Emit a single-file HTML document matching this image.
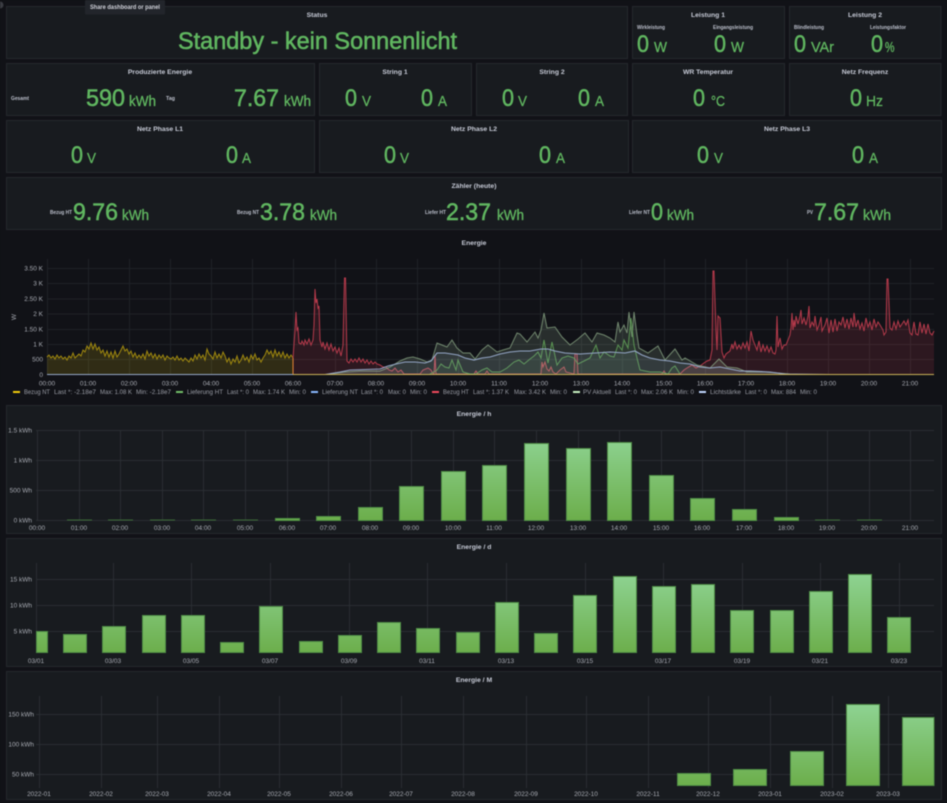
<!DOCTYPE html>
<html><head><meta charset="utf-8"><title>Grafana</title>
<style>
html,body{margin:0;padding:0;background:#111217;width:947px;height:803px;overflow:hidden}
svg{display:block;filter:blur(.4px)}
text{font-family:"Liberation Sans",sans-serif}
.p{fill:#181b1f;stroke:#25282d;stroke-width:1}
.t{font-size:6.8px;font-weight:bold;fill:#c6cad6;text-anchor:middle}
.b{font-size:24.5px;fill:#60b660;stroke:#60b660;stroke-width:.55px}
.u{font-size:15px;fill:#60b660;stroke:#60b660;stroke-width:.3px}
.l{font-size:5.5px;fill:#bcc0cc;font-weight:bold}
.a{font-size:6.5px;fill:#a8abb3}
.e{text-anchor:end}.m{text-anchor:middle}
.k{font-size:6px;fill:#9a9da6}
.g line{stroke:#2a2d32;stroke-width:1}
.gd line{stroke:#1f2227;stroke-width:1}
</style></head><body>
<svg width="947" height="803" viewBox="0 0 947 803" xmlns="http://www.w3.org/2000/svg">
<defs>
<linearGradient id="gh" gradientUnits="userSpaceOnUse" x1="0" y1="432" x2="0" y2="520"><stop offset="0" stop-color="#90d596"/><stop offset="1" stop-color="#6cae4b"/></linearGradient>
<linearGradient id="gd" gradientUnits="userSpaceOnUse" x1="0" y1="570" x2="0" y2="653"><stop offset="0" stop-color="#90d596"/><stop offset="1" stop-color="#6cae4b"/></linearGradient>
<linearGradient id="gm" gradientUnits="userSpaceOnUse" x1="0" y1="700" x2="0" y2="786"><stop offset="0" stop-color="#90d596"/><stop offset="1" stop-color="#6cae4b"/></linearGradient>
</defs>
<rect width="947" height="803" fill="#111217"/>
<circle cx="0" cy="5" r="3.5" fill="#3a3c42"/>

<!-- panels -->
<rect class="p" x="6.5" y="6.5" width="621" height="52"/>
<rect class="p" x="632.5" y="6.5" width="152" height="52"/>
<rect class="p" x="789.5" y="6.5" width="151.5" height="52"/>
<rect class="p" x="6.5" y="63.5" width="308" height="52"/>
<rect class="p" x="319.5" y="63.5" width="152" height="52"/>
<rect class="p" x="476.5" y="63.5" width="151" height="52"/>
<rect class="p" x="632.5" y="63.5" width="152" height="52"/>
<rect class="p" x="789.5" y="63.5" width="151.5" height="52"/>
<rect class="p" x="6.5" y="120.5" width="308" height="52"/>
<rect class="p" x="319.5" y="120.5" width="309" height="52"/>
<rect class="p" x="632.5" y="120.5" width="309" height="52"/>
<rect class="p" x="6.5" y="177.5" width="935" height="52"/>
<rect class="p" x="6.5" y="405.5" width="935" height="128"/>
<rect class="p" x="6.5" y="538.5" width="935" height="128"/>
<rect class="p" x="6.5" y="671.5" width="935" height="128"/>

<!-- tooltip -->
<rect x="85" y="0" width="80" height="14.5" rx="1" fill="#22252b"/>
<text x="90" y="9" font-size="6.2" font-weight="bold" fill="#d0d2da" textLength="70" lengthAdjust="spacingAndGlyphs">Share dashboard or panel</text>

<!-- titles -->
<text class="t" x="317" y="17">Status</text>
<text class="t" x="708" y="17">Leistung 1</text>
<text class="t" x="865" y="17">Leistung 2</text>
<text class="t" x="160" y="74">Produzierte Energie</text>
<text class="t" x="395" y="74">String 1</text>
<text class="t" x="552" y="74">String 2</text>
<text class="t" x="708" y="74">WR Temperatur</text>
<text class="t" x="865" y="74">Netz Frequenz</text>
<text class="t" x="160" y="131">Netz Phase L1</text>
<text class="t" x="474" y="131">Netz Phase L2</text>
<text class="t" x="787" y="131">Netz Phase L3</text>
<text class="t" x="474" y="188">Zähler (heute)</text>
<text class="t" x="474" y="245">Energie</text>
<text class="t" x="474" y="416">Energie / h</text>
<text class="t" x="474" y="549">Energie / d</text>
<text class="t" x="474" y="682">Energie / M</text>

<!-- status -->
<text x="178" y="49" font-size="24" fill="#60b660" stroke="#60b660" stroke-width=".55" textLength="279" lengthAdjust="spacingAndGlyphs">Standby - kein Sonnenlicht</text>

<!-- small labels -->
<text class="l" x="637" y="29" textLength="28" lengthAdjust="spacingAndGlyphs">Wirkleistung</text>
<text class="l" x="713" y="29" textLength="40" lengthAdjust="spacingAndGlyphs">Eingangsleistung</text>
<text class="l" x="794" y="29" textLength="30" lengthAdjust="spacingAndGlyphs">Blindleistung</text>
<text class="l" x="870" y="29" textLength="36" lengthAdjust="spacingAndGlyphs">Leistungsfaktor</text>
<text class="l" x="11" y="100" textLength="18" lengthAdjust="spacingAndGlyphs">Gesamt</text>
<text class="l" x="166" y="100" textLength="9" lengthAdjust="spacingAndGlyphs">Tag</text>
<text class="l" x="50" y="214" textLength="22" lengthAdjust="spacingAndGlyphs">Bezug HT</text>
<text class="l" x="237" y="214" textLength="22" lengthAdjust="spacingAndGlyphs">Bezug NT</text>
<text class="l" x="425" y="214" textLength="21" lengthAdjust="spacingAndGlyphs">Liefer HT</text>
<text class="l" x="629" y="214" textLength="21" lengthAdjust="spacingAndGlyphs">Liefer NT</text>
<text class="l" x="807" y="214" textLength="6" lengthAdjust="spacingAndGlyphs">PV</text>

<!-- values row 1 -->
<text class="b" x="637" y="52" textLength="12" lengthAdjust="spacingAndGlyphs">0</text><text class="u" x="654" y="52" textLength="13" lengthAdjust="spacingAndGlyphs">W</text>
<text class="b" x="714" y="52" textLength="12" lengthAdjust="spacingAndGlyphs">0</text><text class="u" x="731" y="52" textLength="13" lengthAdjust="spacingAndGlyphs">W</text>
<text class="b" x="794" y="52" textLength="12" lengthAdjust="spacingAndGlyphs">0</text><text class="u" x="811" y="52" textLength="23" lengthAdjust="spacingAndGlyphs">VAr</text>
<text class="b" x="871" y="52" textLength="12" lengthAdjust="spacingAndGlyphs">0</text><text class="u" x="885" y="52" textLength="9.500" lengthAdjust="spacingAndGlyphs">%</text>
<!-- row 2 -->
<text class="b" x="86" y="106" textLength="39" lengthAdjust="spacingAndGlyphs">590</text><text class="u" x="129" y="106" textLength="27" lengthAdjust="spacingAndGlyphs">kWh</text>
<text class="b" x="234" y="106" textLength="45" lengthAdjust="spacingAndGlyphs">7.67</text><text class="u" x="284" y="106" textLength="27" lengthAdjust="spacingAndGlyphs">kWh</text>
<text class="b" x="345" y="106" textLength="12" lengthAdjust="spacingAndGlyphs">0</text><text class="u" x="362" y="106" textLength="9" lengthAdjust="spacingAndGlyphs">V</text>
<text class="b" x="421" y="106" textLength="12" lengthAdjust="spacingAndGlyphs">0</text><text class="u" x="438" y="106" textLength="9" lengthAdjust="spacingAndGlyphs">A</text>
<text class="b" x="502" y="106" textLength="12" lengthAdjust="spacingAndGlyphs">0</text><text class="u" x="518" y="106" textLength="9" lengthAdjust="spacingAndGlyphs">V</text>
<text class="b" x="578" y="106" textLength="12" lengthAdjust="spacingAndGlyphs">0</text><text class="u" x="595" y="106" textLength="9" lengthAdjust="spacingAndGlyphs">A</text>
<text class="b" x="693" y="106" textLength="12" lengthAdjust="spacingAndGlyphs">0</text><text class="u" x="711" y="106" textLength="14" lengthAdjust="spacingAndGlyphs">°C</text>
<text class="b" x="850" y="106" textLength="12" lengthAdjust="spacingAndGlyphs">0</text><text class="u" x="866" y="106" textLength="17" lengthAdjust="spacingAndGlyphs">Hz</text>
<!-- row 3 -->
<text class="b" x="71" y="163" textLength="12" lengthAdjust="spacingAndGlyphs">0</text><text class="u" x="87" y="163" textLength="9" lengthAdjust="spacingAndGlyphs">V</text>
<text class="b" x="226" y="163" textLength="12" lengthAdjust="spacingAndGlyphs">0</text><text class="u" x="242" y="163" textLength="9" lengthAdjust="spacingAndGlyphs">A</text>
<text class="b" x="384" y="163" textLength="12" lengthAdjust="spacingAndGlyphs">0</text><text class="u" x="400" y="163" textLength="9" lengthAdjust="spacingAndGlyphs">V</text>
<text class="b" x="539" y="163" textLength="12" lengthAdjust="spacingAndGlyphs">0</text><text class="u" x="556" y="163" textLength="9" lengthAdjust="spacingAndGlyphs">A</text>
<text class="b" x="697" y="163" textLength="12" lengthAdjust="spacingAndGlyphs">0</text><text class="u" x="714" y="163" textLength="9" lengthAdjust="spacingAndGlyphs">V</text>
<text class="b" x="852" y="163" textLength="12" lengthAdjust="spacingAndGlyphs">0</text><text class="u" x="869" y="163" textLength="9" lengthAdjust="spacingAndGlyphs">A</text>
<!-- row 4 -->
<text class="b" x="73" y="220" textLength="45" lengthAdjust="spacingAndGlyphs">9.76</text><text class="u" x="122" y="220" textLength="27" lengthAdjust="spacingAndGlyphs">kWh</text>
<text class="b" x="260" y="220" textLength="45" lengthAdjust="spacingAndGlyphs">3.78</text><text class="u" x="310" y="220" textLength="27" lengthAdjust="spacingAndGlyphs">kWh</text>
<text class="b" x="446" y="220" textLength="45" lengthAdjust="spacingAndGlyphs">2.37</text><text class="u" x="497" y="220" textLength="27" lengthAdjust="spacingAndGlyphs">kWh</text>
<text class="b" x="651" y="220" textLength="12" lengthAdjust="spacingAndGlyphs">0</text><text class="u" x="667" y="220" textLength="27" lengthAdjust="spacingAndGlyphs">kWh</text>
<text class="b" x="814" y="220" textLength="45" lengthAdjust="spacingAndGlyphs">7.67</text><text class="u" x="863" y="220" textLength="28" lengthAdjust="spacingAndGlyphs">kWh</text>

<!-- ENERGIE chart grid -->
<g class="gd">
<line x1="47" y1="268.500" x2="934" y2="268.500"/><line x1="47" y1="283.500" x2="934" y2="283.500"/><line x1="47" y1="299" x2="934" y2="299"/><line x1="47" y1="314" x2="934" y2="314"/><line x1="47" y1="329.500" x2="934" y2="329.500"/><line x1="47" y1="344.500" x2="934" y2="344.500"/><line x1="47" y1="359.500" x2="934" y2="359.500"/>
<line x1="47.500" y1="259" x2="47.500" y2="375"/><line x1="88.500" y1="259" x2="88.500" y2="375"/><line x1="129.500" y1="259" x2="129.500" y2="375"/><line x1="170.500" y1="259" x2="170.500" y2="375"/><line x1="211.500" y1="259" x2="211.500" y2="375"/><line x1="252.500" y1="259" x2="252.500" y2="375"/><line x1="293.500" y1="259" x2="293.500" y2="375"/><line x1="335.500" y1="259" x2="335.500" y2="375"/><line x1="376.500" y1="259" x2="376.500" y2="375"/><line x1="417.500" y1="259" x2="417.500" y2="375"/><line x1="458.500" y1="259" x2="458.500" y2="375"/><line x1="499.500" y1="259" x2="499.500" y2="375"/><line x1="540.500" y1="259" x2="540.500" y2="375"/><line x1="581.500" y1="259" x2="581.500" y2="375"/><line x1="622.500" y1="259" x2="622.500" y2="375"/><line x1="664.500" y1="259" x2="664.500" y2="375"/><line x1="705.500" y1="259" x2="705.500" y2="375"/><line x1="746.500" y1="259" x2="746.500" y2="375"/><line x1="787.500" y1="259" x2="787.500" y2="375"/><line x1="828.500" y1="259" x2="828.500" y2="375"/><line x1="869.500" y1="259" x2="869.500" y2="375"/><line x1="910.500" y1="259" x2="910.500" y2="375"/>
</g>

<!-- yellow -->
<path fill="#f2cc0c" fill-opacity=".14" stroke="none" d="M47 374.500V357L49 355 51 358 53 356 55 359 57 355 59 358 61 356 63 359 65 357 67 360 69 356 71 358 73 353 75 358 77 356 79 354 81 356 83 350 85 352 87 346 89 349 91 343 93 349 95 344 97 350 99 347 101 353 103 350 105 356 107 351 109 357 111 352 113 358 115 351 117 357 119 354 121 350 123 346 125 351 127 349 129 354 131 351 133 357 135 353 137 358 139 355 141 358 143 354 145 359 147 351 149 356 151 353 153 358 155 354 157 359 159 355 161 358 163 355 165 360 167 356 169 358 171 359 173 357 175 360 177 356 179 360 181 358 183 361 185 358 187 360 189 362 191 358 193 361 195 355 197 359 199 354 201 358 203 355 205 360 207 349 209 354 211 356 213 359 215 352 217 358 219 354 221 358 223 352 225 356 227 362 229 358 231 364 233 359 235 362 237 356 239 363 241 360 243 355 245 360 247 357 249 362 251 355 253 359 255 354 257 360 259 358 261 362 263 358 265 355 267 350 269 354 271 351 273 357 275 350 277 356 279 352 281 357 283 352 285 358 287 354 289 358 291 355 293 358V374.500Z"/>
<polyline fill="none" stroke="#d9b80c" stroke-opacity=".7" stroke-width="1" points="47,357 49,355 51,358 53,356 55,359 57,355 59,358 61,356 63,359 65,357 67,360 69,356 71,358 73,353 75,358 77,356 79,354 81,356 83,350 85,352 87,346 89,349 91,343 93,349 95,344 97,350 99,347 101,353 103,350 105,356 107,351 109,357 111,352 113,358 115,351 117,357 119,354 121,350 123,346 125,351 127,349 129,354 131,351 133,357 135,353 137,358 139,355 141,358 143,354 145,359 147,351 149,356 151,353 153,358 155,354 157,359 159,355 161,358 163,355 165,360 167,356 169,358 171,359 173,357 175,360 177,356 179,360 181,358 183,361 185,358 187,360 189,362 191,358 193,361 195,355 197,359 199,354 201,358 203,355 205,360 207,349 209,354 211,356 213,359 215,352 217,358 219,354 221,358 223,352 225,356 227,362 229,358 231,364 233,359 235,362 237,356 239,363 241,360 243,355 245,360 247,357 249,362 251,355 253,359 255,354 257,360 259,358 261,362 263,358 265,355 267,350 269,354 271,351 273,357 275,350 277,356 279,352 281,357 283,352 285,358 287,354 289,358 291,355 293,358"/>

<!-- red -->
<path fill="#f2495c" fill-opacity=".13" stroke="none" d="M293 374.500V358L295 330 296 312 297 330 298 328 299 343 301 344 302 341 304 345 305 340 307 344 309 339 311 345 313 340 314 325 315 289 316 303 317 299 318 308 319 306 320 340 322 347 323 342 325 349 327 343 329 350 331 344 333 351 335 347 337 353 339 348 341 356 343 345 344.500 278 345.500 278 347 361 349 363 351 359 353 362 355 359 357 362 359 358 361 362 363 359 365 363 367 360 369 364 371 361 373 364 375 362 377 364 380 365 383 367 386 367 389 370 392 371 395 368 398 372 401 370 404 374 420 374 423 370 428 368 431 370 433 374 434 374 435 355 436 374 440 374 474 374 476 371 478 374 485 374 487 371 489 374 541 374 542 362 543 367 545 362 547 369 549 371 551 367 553 372 556 374 560 370 564 367 566 372 574 374 575 354 577 354 578 374 662 374 664 371 666 374 680 374 684 370 687 368 692 365 696 368 700 366 704 363 707 361 710 360 712 350 713 271 714 271 716 330 717 350 718 316 720 318 722 352 724 358 726 354 730 351 732 344 733 349 735 342 737 349 739 345 741 349 743 343 745 348 747 342 749 351 751 331 753 340 755 345 757 350 759 341 761 352 763 345 765 351 767 346 769 352 771 347 773 353 775 354 776 350 777 316 778 347 780 338 782 349 784 345 786 345 788 340 790 335 791 328 792 313 793 330 794 320 795 327 796 316 798 324 800 316 801 310 802 324 804 318 806 325 808 316 809 306 810 328 812 322 814 326 815 316 817 330 819 325 821 317 822 331 825 325 827 318 829 333 831 320 833 332 835 319 837 331 839 322 841 325 843 317 845 328 847 319 849 329 851 318 853 327 854 313 856 327 858 320 860 329 862 323 864 331 866 318 868 327 870 322 872 330 874 319 876 327 878 322 880 325 883 330 884 335 886 332 887 279 888 279 890 328 892 330 894 322 896 329 898 321 900 327 902 324 904 321 906 325 908 320 910 333 912 335 914 322 916 334 918 335 920 322 922 333 924 324 926 334 928 324 930 333 932 335 934 331V374.500Z"/>
<polyline fill="none" stroke="#b63a4b" stroke-width="1" points="293,358 295,330 296,312 297,330 298,328 299,343 301,344 302,341 304,345 305,340 307,344 309,339 311,345 313,340 314,325 315,289 316,303 317,299 318,308 319,306 320,340 322,347 323,342 325,349 327,343 329,350 331,344 333,351 335,347 337,353 339,348 341,356 343,345 344.500,278 345.500,278 347,361 349,363 351,359 353,362 355,359 357,362 359,358 361,362 363,359 365,363 367,360 369,364 371,361 373,364 375,362 377,364 380,365 383,367 386,367 389,370 392,371 395,368 398,372 401,370 404,374 420,374 423,370 428,368 431,370 433,374 434,374 435,355 436,374 440,374 474,374 476,371 478,374 485,374 487,371 489,374 541,374 542,362 543,367 545,362 547,369 549,371 551,367 553,372 556,374 560,370 564,367 566,372 574,374 575,354 577,354 578,374 662,374 664,371 666,374 680,374 684,370 687,368 692,365 696,368 700,366 704,363 707,361 710,360 712,350 713,271 714,271 716,330 717,350 718,316 720,318 722,352 724,358 726,354 730,351 732,344 733,349 735,342 737,349 739,345 741,349 743,343 745,348 747,342 749,351 751,331 753,340 755,345 757,350 759,341 761,352 763,345 765,351 767,346 769,352 771,347 773,353 775,354 776,350 777,316 778,347 780,338 782,349 784,345 786,345 788,340 790,335 791,328 792,313 793,330 794,320 795,327 796,316 798,324 800,316 801,310 802,324 804,318 806,325 808,316 809,306 810,328 812,322 814,326 815,316 817,330 819,325 821,317 822,331 825,325 827,318 829,333 831,320 833,332 835,319 837,331 839,322 841,325 843,317 845,328 847,319 849,329 851,318 853,327 854,313 856,327 858,320 860,329 862,323 864,331 866,318 868,327 870,322 872,330 874,319 876,327 878,322 880,325 883,330 884,335 886,332 887,279 888,279 890,328 892,330 894,322 896,329 898,321 900,327 902,324 904,321 906,325 908,320 910,333 912,335 914,322 916,334 918,335 920,322 922,333 924,324 926,334 928,324 930,333 932,335 934,331"/>
<line x1="293" y1="358" x2="293" y2="374" stroke="#e08030" stroke-width="1"/>

<!-- PV fill + line -->
<path fill="#c8f2c2" fill-opacity=".13" stroke="none" d="M330 374.500 L345 372 360 371 380 371 390 367 400 361 407 358 413 357 420 359 427 362 432 360 437 343 442 345 447 347 452 340 457 348 463 353 470 353 475 359 482 350 488 345 497 352 503 350 510 348 517 333 520 334 527 342 535 332 538 338 541 330 544 313 547 328 555 327 562 337 570 345 578 339 585 333 592 342 597 333 604 335 610 338 615 342 618 322 620 332 624 325 627 333 629 312 632 337 634 312 637 335 639 348 648 353 658 346 665 360 675 349 682 360 685 358 697 365 710 368 719 359 727 367 737 368 747 372 765 372 790 374 790 374.500Z"/>
<polyline fill="none" stroke="#8fac89" stroke-opacity=".75" stroke-width="1" points="330,374 345,372 360,371 380,371 390,367 400,361 407,358 413,357 420,359 427,362 432,360 437,343 442,345 447,347 452,340 457,348 463,353 470,353 475,359 482,350 488,345 497,352 503,350 510,348 517,333 520,334 527,342 535,332 538,338 541,330 544,313 547,328 555,327 562,337 570,345 578,339 585,333 592,342 597,333 604,335 610,338 615,342 618,322 620,332 624,325 627,333 629,312 632,337 634,312 637,335 639,348 648,353 658,346 665,360 675,349 682,360 685,358 697,365 710,368 719,359 727,367 737,368 747,372 765,372 790,374"/>

<!-- Lieferung HT green -->
<path fill="#73bf69" fill-opacity=".08" stroke="none" d="M430 374.500 L437 370 441 364 445 367 449 368 452 360 456 370 458 360 463 372 470 374 476 374 482 370 487 368 492 372 500 372 507 368 514 362 519 360 524 364 530 359 534 356 538 352 541 358 544 340 548 363 552 342 557 365 562 358 568 356 574 358 578 364 584 361 590 358 596 345 600 358 604 352 610 356 614 357 618 345 622 350 624 340 628 348 631 318 634 345 637 358 640 370 650 372 660 372 668 374 672 368 675 366 680 374V374.500Z"/>
<polyline fill="none" stroke="#5f9e57" stroke-opacity=".9" stroke-width="1" points="430,374 437,370 441,364 445,367 449,368 452,360 456,370 458,360 463,372 470,374 476,374 482,370 487,368 492,372 500,372 507,368 514,362 519,360 524,364 530,359 534,356 538,352 541,358 544,340 548,363 552,342 557,365 562,358 568,356 574,358 578,364 584,361 590,358 596,345 600,358 604,352 610,356 614,357 618,345 622,350 624,340 628,348 631,318 634,345 637,358 640,370 650,372 660,372 668,374 672,368 675,366 680,374"/>

<!-- Lichtstaerke -->
<path fill="#c0d8ff" fill-opacity=".08" stroke="none" d="M325 374.500 L340 372 350 370 365 369.500 380 369 388 366 396 364 405 362 415 362 425 363 431 361 437 353 445 353 458 355 465 358 474 360 482 358 490 357 500 354 510 352 520 351 530 351 541 349 548 349 555 351 565 353 580 354 595 353 610 352 625 353 635 351 642 355 650 358 660 360 670 361 680 363 690 364 700 367 710 368 720 367 730 369 740 371 750 371 770 372 785 374 800 374.500Z"/>
<polyline fill="none" stroke="#94a6c6" stroke-width="1.100" points="47,374.500 325,374.500 340,372 350,370 365,369.500 380,369 388,366 396,364 405,362 415,362 425,363 431,361 437,353 445,353 458,355 465,358 474,360 482,358 490,357 500,354 510,352 520,351 530,351 541,349 548,349 555,351 565,353 580,354 595,353 610,352 625,353 635,351 642,355 650,358 660,360 670,361 680,363 690,364 700,367 710,368 720,367 730,369 740,371 750,371 770,372 785,374 830,374.500"/>
<line x1="293" y1="374.500" x2="934" y2="374.500" stroke="#c9b257" stroke-width="1"/>

<!-- Energie axes -->
<g class="a e">
<text x="43" y="270.500">3.50 K</text><text x="43" y="285.500">3 K</text><text x="43" y="301">2.50 K</text><text x="43" y="316">2 K</text><text x="43" y="331.500">1.50 K</text><text x="43" y="346.500">1 K</text><text x="43" y="361.500">500</text><text x="43" y="377">0</text>
</g>
<text class="a m" transform="translate(16,317) rotate(-90)">W</text>
<g class="a m">
<text x="47" y="385.500">00:00</text><text x="88" y="385.500">01:00</text><text x="129" y="385.500">02:00</text><text x="170" y="385.500">03:00</text><text x="211" y="385.500">04:00</text><text x="252" y="385.500">05:00</text><text x="293" y="385.500">06:00</text><text x="335" y="385.500">07:00</text><text x="376" y="385.500">08:00</text><text x="417" y="385.500">09:00</text><text x="458" y="385.500">10:00</text><text x="499" y="385.500">11:00</text><text x="540" y="385.500">12:00</text><text x="581" y="385.500">13:00</text><text x="622" y="385.500">14:00</text><text x="664" y="385.500">15:00</text><text x="705" y="385.500">16:00</text><text x="746" y="385.500">17:00</text><text x="787" y="385.500">18:00</text><text x="828" y="385.500">19:00</text><text x="869" y="385.500">20:00</text><text x="910" y="385.500">21:00</text>
</g>

<!-- legend -->
<rect x="13" y="391" width="7" height="2" fill="#f2cc0c"/><rect x="176" y="391" width="7" height="2" fill="#73bf69"/><rect x="311" y="391" width="7" height="2" fill="#8ab8ff"/><rect x="432" y="391" width="7" height="2" fill="#f2495c"/><rect x="573" y="391" width="7" height="2" fill="#c8f2c2"/><rect x="699" y="391" width="7" height="2" fill="#c0d8ff"/>
<g class="k">
<text x="24" y="394" textLength="26" lengthAdjust="spacingAndGlyphs">Bezug NT</text><text x="54" y="394" textLength="42" lengthAdjust="spacingAndGlyphs">Last *: -2.18e7</text><text x="100" y="394" textLength="32" lengthAdjust="spacingAndGlyphs">Max: 1.08 K</text><text x="136" y="394" textLength="35" lengthAdjust="spacingAndGlyphs">Min: -2.18e7</text>
<text x="187" y="394" textLength="36" lengthAdjust="spacingAndGlyphs">Lieferung HT</text><text x="227" y="394" textLength="22" lengthAdjust="spacingAndGlyphs">Last *: 0</text><text x="253" y="394" textLength="32" lengthAdjust="spacingAndGlyphs">Max: 1.74 K</text><text x="289" y="394" textLength="17" lengthAdjust="spacingAndGlyphs">Min: 0</text>
<text x="322" y="394" textLength="36" lengthAdjust="spacingAndGlyphs">Lieferung NT</text><text x="361" y="394" textLength="22" lengthAdjust="spacingAndGlyphs">Last *: 0</text><text x="388" y="394" textLength="18" lengthAdjust="spacingAndGlyphs">Max: 0</text><text x="410" y="394" textLength="17" lengthAdjust="spacingAndGlyphs">Min: 0</text>
<text x="443" y="394" textLength="26" lengthAdjust="spacingAndGlyphs">Bezug HT</text><text x="473" y="394" textLength="36" lengthAdjust="spacingAndGlyphs">Last *: 1.37 K</text><text x="514" y="394" textLength="32" lengthAdjust="spacingAndGlyphs">Max: 3.42 K</text><text x="550" y="394" textLength="17" lengthAdjust="spacingAndGlyphs">Min: 0</text>
<text x="583" y="394" textLength="28" lengthAdjust="spacingAndGlyphs">PV Aktuell</text><text x="615" y="394" textLength="22" lengthAdjust="spacingAndGlyphs">Last *: 0</text><text x="641" y="394" textLength="32" lengthAdjust="spacingAndGlyphs">Max: 2.06 K</text><text x="677" y="394" textLength="17" lengthAdjust="spacingAndGlyphs">Min: 0</text>
<text x="710" y="394" textLength="31" lengthAdjust="spacingAndGlyphs">Lichtstärke</text><text x="745" y="394" textLength="22" lengthAdjust="spacingAndGlyphs">Last *: 0</text><text x="771" y="394" textLength="25" lengthAdjust="spacingAndGlyphs">Max: 884</text><text x="800" y="394" textLength="17" lengthAdjust="spacingAndGlyphs">Min: 0</text>
</g>

<!-- Energie / h -->
<g class="g">
<line x1="36" y1="430.500" x2="934" y2="430.500"/><line x1="36" y1="460.500" x2="934" y2="460.500"/><line x1="36" y1="490.500" x2="934" y2="490.500"/><line x1="36" y1="520.500" x2="934" y2="520.500"/>
<line x1="37.500" y1="430" x2="37.500" y2="521"/><line x1="79.500" y1="430" x2="79.500" y2="521"/><line x1="120.500" y1="430" x2="120.500" y2="521"/><line x1="162.500" y1="430" x2="162.500" y2="521"/><line x1="203.500" y1="430" x2="203.500" y2="521"/><line x1="245.500" y1="430" x2="245.500" y2="521"/><line x1="287.500" y1="430" x2="287.500" y2="521"/><line x1="328.500" y1="430" x2="328.500" y2="521"/><line x1="370.500" y1="430" x2="370.500" y2="521"/><line x1="411.500" y1="430" x2="411.500" y2="521"/><line x1="453.500" y1="430" x2="453.500" y2="521"/><line x1="494.500" y1="430" x2="494.500" y2="521"/><line x1="536.500" y1="430" x2="536.500" y2="521"/><line x1="578.500" y1="430" x2="578.500" y2="521"/><line x1="619.500" y1="430" x2="619.500" y2="521"/><line x1="661.500" y1="430" x2="661.500" y2="521"/><line x1="702.500" y1="430" x2="702.500" y2="521"/><line x1="744.500" y1="430" x2="744.500" y2="521"/><line x1="786.500" y1="430" x2="786.500" y2="521"/><line x1="827.500" y1="430" x2="827.500" y2="521"/><line x1="869.500" y1="430" x2="869.500" y2="521"/><line x1="910.500" y1="430" x2="910.500" y2="521"/>
</g>
<g fill="#3c6b38">
<rect x="67" y="519.500" width="25" height="1"/><rect x="108" y="519.500" width="25" height="1"/><rect x="150" y="519.500" width="25" height="1"/><rect x="191" y="519.500" width="25" height="1"/><rect x="233" y="519.500" width="25" height="1"/><rect x="815" y="519.500" width="25" height="1"/><rect x="857" y="519.500" width="25" height="1"/>
</g>
<g fill="url(#gh)" stroke="#4e8c45" stroke-width="1">
<rect x="275.500" y="518.500" width="24" height="2"/>
<rect x="316.500" y="516.500" width="24" height="4"/><rect x="358.500" y="507.500" width="24" height="13"/><rect x="399.500" y="486.500" width="24" height="34"/><rect x="441.500" y="471.500" width="24" height="49"/><rect x="482.500" y="465.500" width="24" height="55"/><rect x="524.500" y="443.500" width="24" height="77"/><rect x="566.500" y="448.500" width="24" height="72"/><rect x="607.500" y="442.500" width="24" height="78"/><rect x="649.500" y="475.500" width="24" height="45"/><rect x="690.500" y="498.500" width="24" height="22"/><rect x="732.500" y="509.500" width="24" height="11"/><rect x="774.500" y="517.500" width="24" height="3"/>
</g>
<g class="a e">
<text x="32" y="432.500">1.5 kWh</text><text x="32" y="462.500">1 kWh</text><text x="32" y="492.500">500 Wh</text><text x="32" y="522.500">0 kWh</text>
</g>
<g class="a m">
<text x="37" y="530">00:00</text><text x="79" y="530">01:00</text><text x="120" y="530">02:00</text><text x="162" y="530">03:00</text><text x="203" y="530">04:00</text><text x="245" y="530">05:00</text><text x="287" y="530">06:00</text><text x="328" y="530">07:00</text><text x="370" y="530">08:00</text><text x="411" y="530">09:00</text><text x="453" y="530">10:00</text><text x="494" y="530">11:00</text><text x="536" y="530">12:00</text><text x="578" y="530">13:00</text><text x="619" y="530">14:00</text><text x="661" y="530">15:00</text><text x="702" y="530">16:00</text><text x="744" y="530">17:00</text><text x="786" y="530">18:00</text><text x="827" y="530">19:00</text><text x="869" y="530">20:00</text><text x="910" y="530">21:00</text>
</g>

<!-- Energie / d -->
<g class="g">
<line x1="36" y1="579.500" x2="934" y2="579.500"/><line x1="36" y1="605.500" x2="934" y2="605.500"/><line x1="36" y1="631.500" x2="934" y2="631.500"/>
<line x1="36.500" y1="563" x2="36.500" y2="653"/><line x1="113.500" y1="563" x2="113.500" y2="653"/><line x1="191.500" y1="563" x2="191.500" y2="653"/><line x1="270.500" y1="563" x2="270.500" y2="653"/><line x1="349.500" y1="563" x2="349.500" y2="653"/><line x1="427.500" y1="563" x2="427.500" y2="653"/><line x1="506.500" y1="563" x2="506.500" y2="653"/><line x1="585.500" y1="563" x2="585.500" y2="653"/><line x1="663.500" y1="563" x2="663.500" y2="653"/><line x1="742.500" y1="563" x2="742.500" y2="653"/><line x1="820.500" y1="563" x2="820.500" y2="653"/><line x1="899.500" y1="563" x2="899.500" y2="653"/>
</g>
<g fill="url(#gd)" stroke="#4e8c45" stroke-width="1">
<rect x="36.500" y="631.500" width="11" height="21"/><rect x="63.500" y="634.500" width="23" height="18"/><rect x="102.500" y="626.500" width="23" height="26"/><rect x="142.500" y="615.500" width="23" height="37"/><rect x="181.500" y="615.500" width="23" height="37"/><rect x="220.500" y="642.500" width="23" height="10"/><rect x="259.500" y="606.500" width="23" height="46"/><rect x="299.500" y="641.500" width="23" height="11"/><rect x="338.500" y="635.500" width="23" height="17"/><rect x="377.500" y="622.500" width="23" height="30"/><rect x="416.500" y="628.500" width="23" height="24"/><rect x="456.500" y="632.500" width="23" height="20"/><rect x="495.500" y="602.500" width="23" height="50"/><rect x="534.500" y="633.500" width="23" height="19"/><rect x="573.500" y="595.500" width="23" height="57"/><rect x="613.500" y="576.500" width="23" height="76"/><rect x="652.500" y="586.500" width="23" height="66"/><rect x="691.500" y="584.500" width="23" height="68"/><rect x="730.500" y="610.500" width="23" height="42"/><rect x="770.500" y="610.500" width="23" height="42"/><rect x="809.500" y="591.500" width="23" height="61"/><rect x="848.500" y="574.500" width="23" height="78"/><rect x="887.500" y="617.500" width="23" height="35"/>
</g>
<g class="a e">
<text x="32" y="581.500">15 kWh</text><text x="32" y="607.500">10 kWh</text><text x="32" y="633.500">5 kWh</text>
</g>
<g class="a m">
<text x="36" y="663">03/01</text><text x="113" y="663">03/03</text><text x="191" y="663">03/05</text><text x="270" y="663">03/07</text><text x="349" y="663">03/09</text><text x="427" y="663">03/11</text><text x="506" y="663">03/13</text><text x="585" y="663">03/15</text><text x="663" y="663">03/17</text><text x="742" y="663">03/19</text><text x="820" y="663">03/21</text><text x="899" y="663">03/23</text>
</g>

<!-- Energie / M -->
<g class="g">
<line x1="36" y1="714.500" x2="934" y2="714.500"/><line x1="36" y1="744.500" x2="934" y2="744.500"/><line x1="36" y1="774.500" x2="934" y2="774.500"/>
<line x1="39.500" y1="696" x2="39.500" y2="788"/><line x1="101.500" y1="696" x2="101.500" y2="788"/><line x1="157.500" y1="696" x2="157.500" y2="788"/><line x1="219.500" y1="696" x2="219.500" y2="788"/><line x1="279.500" y1="696" x2="279.500" y2="788"/><line x1="341.500" y1="696" x2="341.500" y2="788"/><line x1="401.500" y1="696" x2="401.500" y2="788"/><line x1="463.500" y1="696" x2="463.500" y2="788"/><line x1="526.500" y1="696" x2="526.500" y2="788"/><line x1="586.500" y1="696" x2="586.500" y2="788"/><line x1="648.500" y1="696" x2="648.500" y2="788"/><line x1="708.500" y1="696" x2="708.500" y2="788"/><line x1="770.500" y1="696" x2="770.500" y2="788"/><line x1="832.500" y1="696" x2="832.500" y2="788"/><line x1="888.500" y1="696" x2="888.500" y2="788"/>
</g>
<g fill="url(#gm)" stroke="#4e8c45" stroke-width="1">
<rect x="677.500" y="773.500" width="33" height="12"/><rect x="733.500" y="769.500" width="33" height="16"/><rect x="790.500" y="751.500" width="33" height="34"/><rect x="846.500" y="704.500" width="33" height="81"/><rect x="902.500" y="717.500" width="31.500" height="68"/>
</g>
<g class="a e">
<text x="34" y="716.500">150 kWh</text><text x="34" y="746.500">100 kWh</text><text x="34" y="776.500">50 kWh</text>
</g>
<g class="a m">
<text x="39" y="796">2022-01</text><text x="101" y="796">2022-02</text><text x="157" y="796">2022-03</text><text x="219" y="796">2022-04</text><text x="279" y="796">2022-05</text><text x="341" y="796">2022-06</text><text x="401" y="796">2022-07</text><text x="463" y="796">2022-08</text><text x="526" y="796">2022-09</text><text x="586" y="796">2022-10</text><text x="648" y="796">2022-11</text><text x="708" y="796">2022-12</text><text x="770" y="796">2023-01</text><text x="832" y="796">2023-02</text><text x="888" y="796">2023-03</text>
</g>
</svg>
</body></html>
